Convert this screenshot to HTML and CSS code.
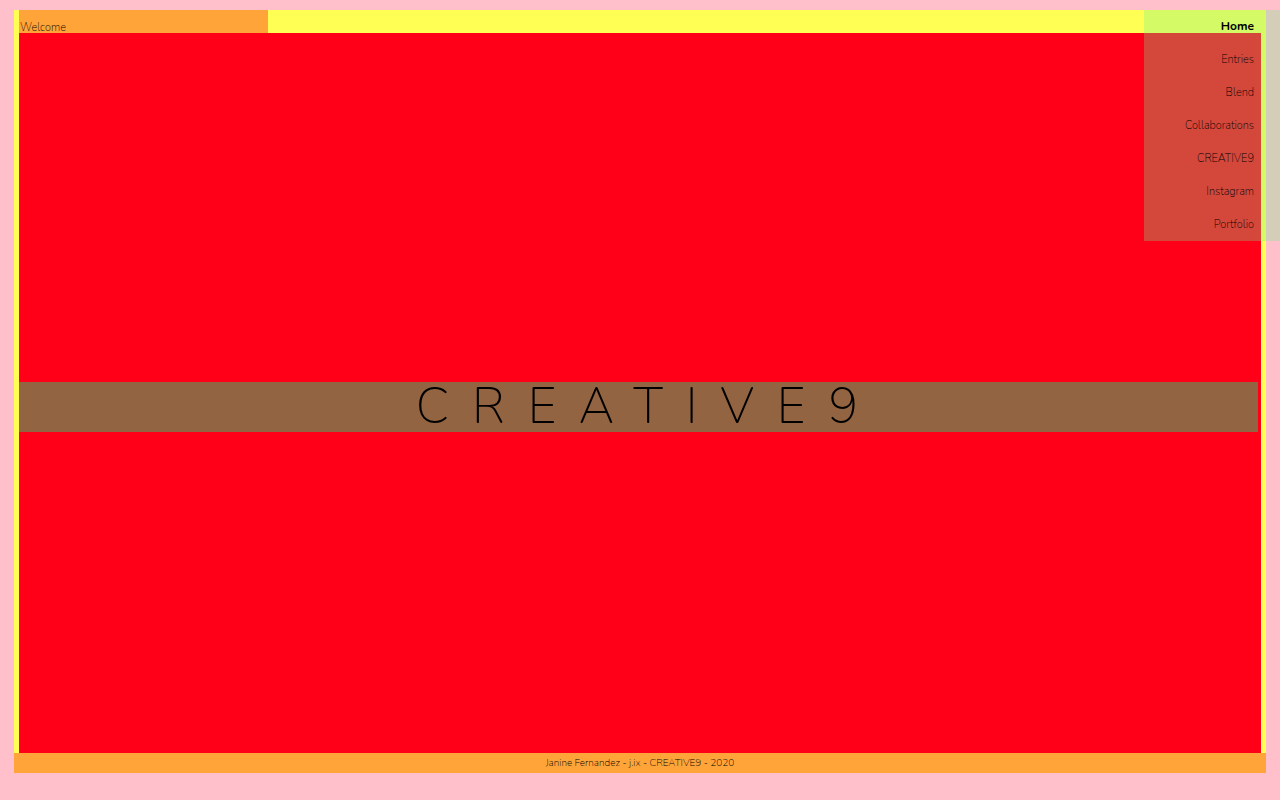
FILE: index.html
```html
<!DOCTYPE html>
<html lang="en">
<head>
<meta charset="utf-8">
<meta name="viewport" content="width=device-width, initial-scale=1">
<title>CREATIVE9</title>
<link rel="stylesheet" href="styles.css">
</head>
<body>
<div class="page">
  <header class="header">
    <div class="welcome">Welcome</div>
    <nav class="menu" aria-label="Main">
      <a class="menu-link current" href="#home" aria-current="page">Home</a>
      <a class="menu-link" href="#entries">Entries</a>
      <a class="menu-link" href="#blend">Blend</a>
      <a class="menu-link" href="#collaborations">Collaborations</a>
      <a class="menu-link" href="#creative9">CREATIVE9</a>
      <a class="menu-link" href="#instagram">Instagram</a>
      <a class="menu-link" href="#portfolio">Portfolio</a>
    </nav>
  </header>
  <main class="hero">
    <h1 class="title">CREATIVE9</h1>
  </main>
  <footer class="footer">Janine Fernandez - j.ix - CREATIVE9 - 2020</footer>
</div>
</body>
</html>
```

FILE: styles.css
```css
* {
  box-sizing: border-box;
}

body {
  margin: 0;
  padding: 10px 14px 27px;
  background: #ffc0cb;
  color: #000;
  font-family: Nunito, Lato, sans-serif;
  font-size: 11px;
  font-weight: 250;
}

.page {
  display: flex;
  flex-direction: column;
  min-height: calc(100vh - 37px);
  background: #ffff54;
}

.header {
  display: flex;
  margin: 0 5px;
}

.welcome {
  box-sizing: content-box;
  width: 20%;
  padding-top: 13px;
  padding-left: 1px;
  background: #ffa439;
  line-height: 10px;
}

/* Translucent menu laid over the header and the hero */
.menu {
  position: absolute;
  top: 10px;
  right: 0;
  display: flex;
  flex-direction: column;
  width: 136px;
  padding-right: 26px;
  background: rgba(112, 240, 144, 0.3);
  text-align: right;
}

.menu-link {
  color: inherit;
  line-height: 33px;
  text-decoration: none;
}

.current {
  font-size: 12px;
  font-weight: 700;
}

.hero {
  display: flex;
  flex: 1;
  flex-direction: column;
  justify-content: center;
  margin: 0 5px;
  padding: 50px 3px 22px 0;
  background: #ff0018;
}

.title {
  margin: 0;
  background: #926441;
  font-size: 50px;
  font-weight: 250;
  letter-spacing: 23px;
  line-height: 50px;
  text-align: center;
  text-indent: 20px;
}

.footer {
  background: #ffa439;
  font-size: 10px;
  line-height: 20px;
  text-align: center;
}
```
